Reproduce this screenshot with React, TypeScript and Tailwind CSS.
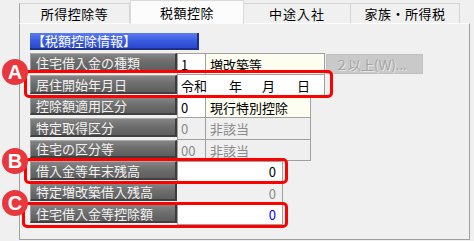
import React from "react";

const FONT = "font-['Noto_Sans_CJK_JP','Noto_Sans_CJK_SC',sans-serif]";

function Label({ text, h }: { text: string; h: string }) {
  return (
    <div
      className={`w-[147px] ${h} flex items-center pl-[5px] bg-gradient-to-b from-[#858585] via-[#6c6c6c] to-[#5e5e5e] border-t border-l border-t-[#a8a8a8] border-l-[#9a9a9a] border-r-2 border-b-2 border-r-[#3c3c3c] border-b-[#404040] text-[#f2f2f2] text-[13px] leading-none whitespace-nowrap shrink-0`}
    >
      {text}
    </div>
  );
}

export default function App() {
  return (
    <div className={`relative w-[474px] h-[241px] bg-[#f0f0f0] overflow-hidden ${FONT} text-[13px] leading-none text-black`}>
      {/* tabs */}
      <div className="flex items-end h-[23px] pl-[19px]">
        <div className="w-[111px] h-[20px] border border-b-0 border-[#d4d4d4] border-l-[#a0a0a0] bg-[#f0f0f0] flex items-center justify-center tracking-[0.5px]">
          所得控除等
        </div>
        <div className="w-[114px] h-[24px] -mb-px border border-b-0 border-[#d9d9d9] bg-[#fcfcfc] flex items-center justify-center tracking-[0.5px] relative z-10">
          税額控除
        </div>
        <div className="w-[107px] h-[20px] border border-b-0 border-l-0 border-[#d4d4d4] bg-[#f0f0f0] flex items-center justify-center tracking-[1px]">
          中途入社
        </div>
        <div className="w-[109px] h-[20px] border border-b-0 border-l-0 border-[#d4d4d4] bg-[#f0f0f0] flex items-center justify-center tracking-[0.5px]">
          家族・所得税
        </div>
      </div>

      {/* panel */}
      <div className="ml-[19px] w-[451px] h-[217px] border border-[#a0a0a0] border-t-white bg-[#f0f0f0] pl-[10px] pt-[9px]">
        <div className="w-[169px] h-[17px] flex items-center pl-[2px] bg-gradient-to-b from-[#5c7cf0] via-[#3a5ce0] to-[#2a48cc] border-r-2 border-b-2 border-r-[#1c2f8a] border-b-[#1c2f8a] text-white text-[13px]">
          【税額控除情報】
        </div>

        <div className="mt-[3px] flex flex-col">
          {/* row 1 */}
          <div className="flex h-[22px]">
            <Label text="住宅借入金の種類" h="h-[19px]" />
            <div className="w-[29px] h-[22px] border border-[#a0a0a0] bg-white flex items-center pl-[3px]">1</div>
            <div className="w-[119px] h-[22px] border border-l-0 border-[#a0a0a0] bg-[#fdfdf0] flex items-center pl-[4px]">増改築等</div>
            <div className="ml-px w-[97px] h-[20px] mt-px bg-[#c9c9c9] border border-[#c0c0c0] flex items-center pl-[8px] text-[#a3a3a3] [text-shadow:1px_1px_0_#e8e8e8] whitespace-nowrap">
              ２以上(Ｗ)...
            </div>
          </div>
          {/* row 2 */}
          <div className="flex h-[22px]">
            <Label text="居住開始年月日" h="h-[19px]" />
            <div className="w-[148px] h-[22px] border border-t-0 border-[#a0a0a0] bg-white flex items-center pl-[3px] whitespace-nowrap">
              <span>令和</span>
              <span className="ml-[22px]">年</span>
              <span className="ml-[20px]">月</span>
              <span className="ml-[22px]">日</span>
            </div>
          </div>
          {/* row 3 */}
          <div className="flex h-[21px]">
            <Label text="控除額適用区分" h="h-[18px]" />
            <div className="w-[29px] h-[21px] border border-t-0 border-[#a0a0a0] bg-white flex items-center pl-[3px]">0</div>
            <div className="w-[105px] h-[21px] border border-t-0 border-l-0 border-[#a0a0a0] bg-[#fdfdf0] flex items-center pl-[4px]">現行特別控除</div>
          </div>
          {/* row 4 */}
          <div className="flex h-[22px]">
            <Label text="特定取得区分" h="h-[19px]" />
            <div className="w-[29px] h-[22px] border border-t-0 border-[#a0a0a0] bg-[#efefef] flex items-center pl-[3px] text-[#8a8a8a]">0</div>
            <div className="w-[105px] h-[22px] border border-t-0 border-l-0 border-[#a0a0a0] bg-[#efefef] flex items-center pl-[4px] text-[#8a8a8a]">非該当</div>
          </div>
          {/* row 5 */}
          <div className="flex h-[21px]">
            <Label text="住宅の区分等" h="h-[18px]" />
            <div className="w-[29px] h-[21px] border border-t-0 border-[#a0a0a0] bg-[#efefef] flex items-center pl-[3px] text-[#8a8a8a]">00</div>
            <div className="w-[105px] h-[21px] border border-t-0 border-l-0 border-[#a0a0a0] bg-[#efefef] flex items-center pl-[4px] text-[#8a8a8a]">非該当</div>
          </div>
          {/* row 6 */}
          <div className="flex h-[22px]">
            <Label text="借入金等年末残高" h="h-[19px]" />
            <div className="w-[106px] h-[21px] border border-[#a0a0a0] bg-white flex items-center justify-end pr-[6px]">0</div>
          </div>
          {/* row 7 */}
          <div className="flex h-[21px]">
            <Label text="特定増改築借入残高" h="h-[18px]" />
            <div className="w-[106px] h-[21px] border-r border-[#a0a0a0] flex items-center justify-end pr-[6px] text-[#8a8a8a]">0</div>
          </div>
          {/* row 8 */}
          <div className="flex h-[22px]">
            <Label text="住宅借入金等控除額" h="h-[19px]" />
            <div className="w-[106px] h-[21px] border border-[#a0a0a0] bg-white flex items-center justify-end pr-[6px] text-[#0000ff]">0</div>
          </div>
        </div>
      </div>

      {/* red highlight rectangles */}
      <div className="absolute left-[24px] top-[70px] w-[309px] h-[28px] border-[3px] border-[#ff0000] rounded-[5px]" />
      <div className="absolute left-[24px] top-[158px] w-[264px] h-[26px] border-[3px] border-[#ff0000] rounded-[5px]" />
      <div className="absolute left-[22px] top-[202px] w-[266px] h-[26px] border-[3px] border-[#ff0000] rounded-[5px]" />

      {/* badges */}
      {[
        { l: "A", t: "top-[59px]" },
        { l: "B", t: "top-[148px]" },
        { l: "C", t: "top-[190px]" },
      ].map((b) => (
        <div
          key={b.l}
          className={`absolute left-[2px] ${b.t} w-[26px] h-[26px] rounded-full bg-[#e8383d] flex items-center justify-center text-white text-[20px] font-bold font-['Liberation_Sans',sans-serif] leading-none`}
        >
          {b.l}
        </div>
      ))}
    </div>
  );
}
